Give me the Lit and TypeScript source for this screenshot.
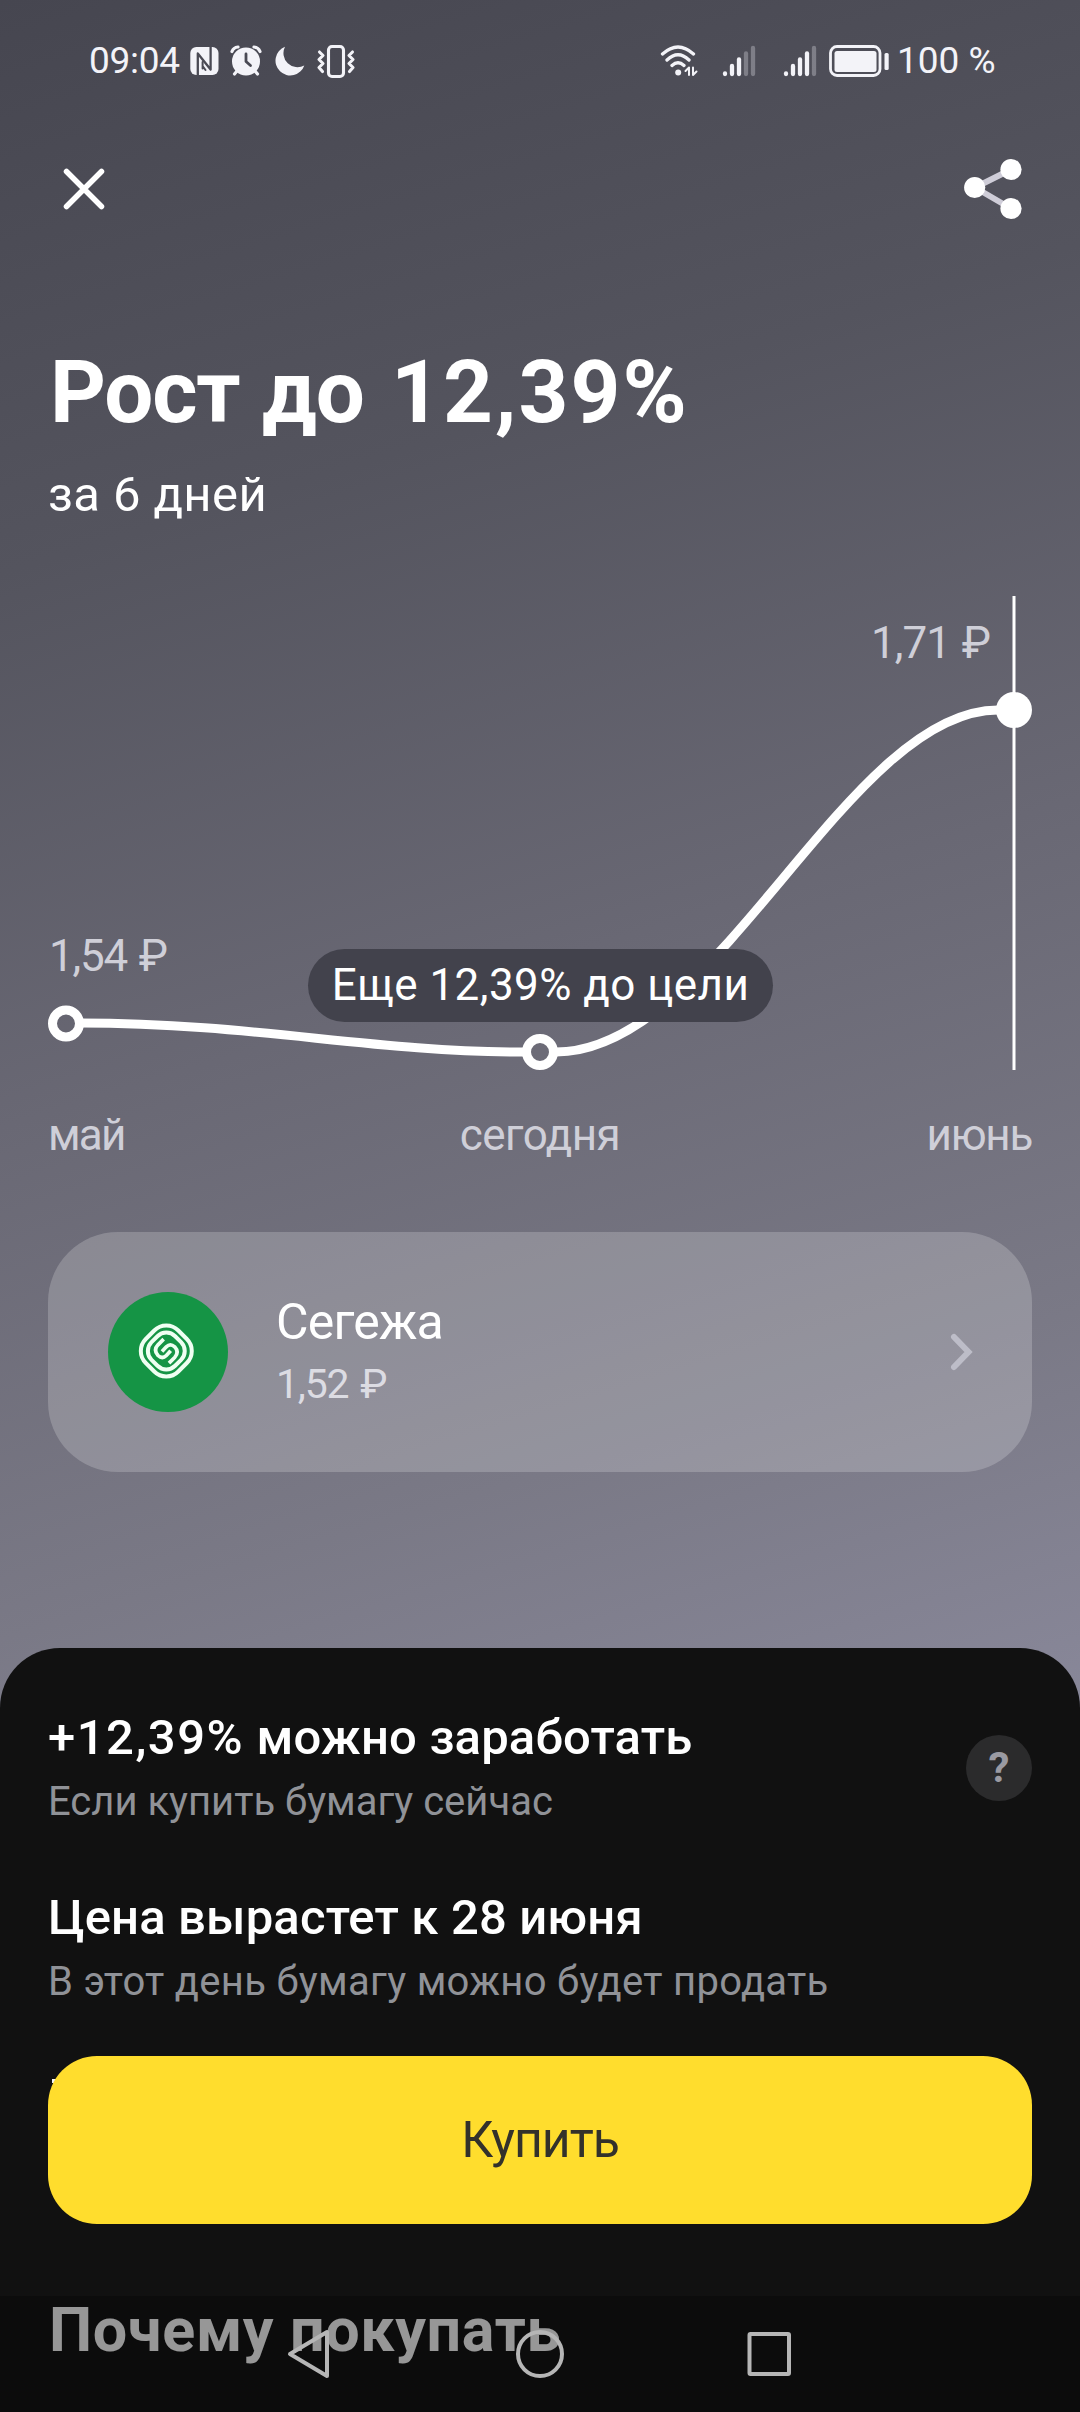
import { LitElement, html, css, svg } from "lit";
import { customElement } from "lit/decorators.js";

@customElement("app-root")
export class AppRoot extends LitElement {
  static styles = css`
    :host { display: block; width: 1080px; height: 2412px; overflow: hidden; position: relative;
      font-family: Roboto, "Noto Sans", sans-serif; color: #fff; background: #111; line-height: 1; white-space: nowrap; }
    * { box-sizing: border-box; margin: 0; }
    svg { display: block; flex: none; }
    .hero { height: 1720px; background: linear-gradient(163deg, #464650 0%, #54545e 28%, #696874 55%, #7a7986 80%, #89889a 100%); display: flex; flex-direction: column; }
    .status { height: 122px; display: flex; justify-content: space-between; padding: 42px 84px 0 89px; color: #f3f3f8; font-size: 37px; }
    .group { display: flex; height: 40px; align-items: center; }
    .time { width: 99px; letter-spacing: -.3px; margin-top: -3px; }
    .pct { width: 100px; padding-left: 1px; margin-top: -3px; }
    .bar { display: flex; justify-content: space-between; align-items: center; height: 134px; padding: 0 48px; }
    .title { font-size: 87px; font-weight: 700; margin: 96px 0 0 50px; height: 106px; line-height: 81px; letter-spacing: -1.2px; word-spacing: 2px; }
    .title span { letter-spacing: 2.1px; margin-left: 5px; }
    .sub { font-size: 49px; margin-left: 48px; height: 138px; line-height: 74px; letter-spacing: .4px; }
    .chart { position: relative; height: 487px; }
    .val { position: absolute; font-size: 44px; color: #cfcfd8; letter-spacing: -1.2px; word-spacing: 2px; }
    .v1 { left: 49px; top: 338px; }
    .v2 { right: 90px; top: 25px; letter-spacing: -1px; }
    .tip { position: absolute; left: 308px; top: 353px; width: 465px; height: 73px; border-radius: 37px; background: #42424c; display: flex; align-items: center; justify-content: center; font-size: 44px; letter-spacing: .45px; padding-bottom: 2px; }
    .months { display: grid; grid-template-columns: 1fr auto 1fr; padding: 0 48px; font-size: 44px; height: 149px; line-height: 104px; color: #cfcfd8; letter-spacing: -.5px; }
    .may { letter-spacing: -1.8px; }
    .june { text-align: right; letter-spacing: -1.3px; }
    .card { margin: 0 48px; height: 240px; border-radius: 70px; background: rgba(255,255,255,.2); display: flex; align-items: center; padding: 0 56px 0 60px; }
    .names { flex: 1; margin-left: 48px; padding-top: 4px; }
    .name { font-size: 50px; line-height: 60px; letter-spacing: -.8px; }
    .price { font-size: 41px; line-height: 64px; color: #dcdce3; letter-spacing: -1.2px; word-spacing: 3px; }
    .sheet { position: absolute; left: 0; top: 1648px; width: 1080px; height: 764px; border-radius: 60px 60px 0 0; background: #111; padding: 60px 48px 0; }
    .row { display: flex; justify-content: space-between; align-items: center; height: 120px; margin-bottom: 60px; }
    .h { font-size: 49px; font-weight: 500; line-height: 60px; letter-spacing: .15px; }
    .h b { font-weight: 500; letter-spacing: 1.5px; }
    .d { font-size: 40px; line-height: 60px; padding-top: 4px; margin-bottom: -4px; color: #909297; }
    .wide { letter-spacing: .3px; }
    .help { width: 66px; height: 66px; border-radius: 50%; background: #2b2b2c; color: #9a9aa2; font-size: 42px; font-weight: 700; display: flex; align-items: center; justify-content: center; }
    .peek { width: 7px; height: 4px; background: #f4f4f4; margin: 71px 0 0 4px; }
    .buy { position: absolute; left: 48px; top: 408px; width: 984px; height: 168px; border-radius: 49px; background: #ffdd2d; color: #33312b; font-size: 50px; letter-spacing: -1px; display: flex; align-items: center; justify-content: center; }
    .why { position: absolute; left: 49px; top: 652px; font-size: 61px; font-weight: 700; letter-spacing: .65px; }
    .nav { position: absolute; left: 0; top: 2296px; width: 1080px; height: 116px; background: rgba(8,8,8,.42); }
  `;

  private signal(x: number, on: number) {
    return [73.5, 66, 59.5, 53.5, 48].map(
      (top, i) => svg`<path d=${`M${x + i * 7} ${top}V74`} stroke-width="4.3" opacity=${i < on ? 1 : 0.3} />`
    );
  }

  render() {
    return html`
      <div class="hero">
        <div class="status">
          <div class="group">
            <span class="time">09:04</span>
            <svg width="170" height="40" viewBox="188 42 170 40" fill="none" stroke-linecap="round" stroke-linejoin="round">
              <rect x="190.3" y="47" width="28.2" height="28" rx="6" fill="#f3f3f8" />
              <path d="M197.8 76V53.5L210.6 69.5V46" stroke="#4a4a54" stroke-width="2.3" stroke-linecap="butt" />
              <path d="M202.6 68.5V62M205.5 70L202.6 66" stroke="#4a4a54" stroke-width="2" />
              <g stroke="#f3f3f8" stroke-width="3.2">
                <circle cx="246" cy="61.5" r="14" fill="#f3f3f8" stroke="none" />
                <path d="M232 51.5Q233.500 47.500 238 47M260 51.5Q258.500 47.500 254 47M237 71L234.500 74M255 71L257.500 74" />
              </g>
              <path d="M246 54V61.500L250.500 65.500" stroke="#4a4a54" stroke-width="2.800" />
              <path d="M285 46.800A14.800 14.800 0 1 0 304.300 65.400A14 14 0 0 1 285 46.800Z" fill="#f3f3f8" />
              <g stroke="#f3f3f8" stroke-width="3.100">
                <rect x="328.500" y="46.500" width="15" height="30" rx="3.500" />
                <path d="M319.500 52L323 55.500L319 59.500L323 63.500L319 67.500L322.500 71.500M352.500 52L349 55.500L353 59.500L349 63.500L353 67.500L349.500 71.500" />
              </g>
            </svg>
          </div>
          <div class="group">
            <svg width="238" height="40" viewBox="658 42 238 40" fill="none" stroke="#f3f3f8" stroke-linecap="round">
              <path d="M662.500 54Q678 40 693.500 54M667 60Q678 49.500 689 60M672 65.500Q678 60 684 65.500" stroke-width="3.300" />
              <circle cx="678.200" cy="72.500" r="3" fill="#f3f3f8" stroke="none" />
              <path d="M685.500 71L689 67.500V75M693 67.500V75L696.500 71.500" stroke-width="2" stroke-linejoin="round" />
              ${this.signal(725, 3)}${this.signal(786, 4)}
              <rect x="830.500" y="46.500" width="49.500" height="29" rx="6.500" stroke-width="2.800" />
              <rect x="834.500" y="51" width="42" height="21" rx="2.500" fill="#f3f3f8" stroke="none" />
              <rect x="884.500" y="53" width="4.200" height="17" rx="1.500" fill="#f3f3f8" stroke="none" />
            </svg>
            <span class="pct">100 %</span>
          </div>
        </div>
        <div class="bar">
          <svg width="72" height="72" viewBox="48 153 72 72" stroke="#fff" stroke-width="5.500" stroke-linecap="round">
            <path d="M66.500 171.500L101.500 206.500M101.500 171.500L66.500 206.500" />
          </svg>
          <svg width="72" height="72" viewBox="960 153 72 72" fill="#fff">
            <path d="M1011 169.500L975 187.500L1011 208.500" fill="none" stroke="#cfcdd8" stroke-width="6" />
            <circle cx="974.700" cy="187.500" r="10.600" /><circle cx="1011" cy="169.500" r="10.600" /><circle cx="1011" cy="208.500" r="10.600" />
          </svg>
        </div>
        <h1 class="title">Рост до <span>12,39%</span></h1>
        <div class="sub">за 6 дней</div>
        <div class="chart">
          <svg width="1080" height="487" viewBox="0 596 1080 487" fill="none" stroke="#fff">
            <path d="M1014 596V1070" stroke-width="3" />
            <path d="M80 1023C253 1023 371 1052 524 1052M556 1052C717 1052 847 710 998 710" stroke-width="9" />
            <circle cx="66" cy="1023.500" r="13.500" stroke-width="9" />
            <circle cx="540" cy="1052" r="13.500" stroke-width="9" />
            <circle cx="1014" cy="710" r="18" fill="#fff" stroke="none" />
          </svg>
          <span class="val v1">1,54 ₽</span><span class="val v2">1,71 ₽</span>
          <div class="tip">Еще 12,39% до цели</div>
        </div>
        <div class="months"><span class="may">май</span><span>сегодня</span><span class="june">июнь</span></div>
        <div class="card">
          <svg width="120" height="120" viewBox="108 1292 120 120" fill="none" stroke="#effff2" stroke-width="4">
            <circle cx="168" cy="1352" r="60" fill="#159445" stroke="none" />
            <g transform="rotate(45 166.300 1351)">
              <rect x="143.300" y="1328" width="46" height="46" rx="17" />
              <rect x="149.600" y="1334.300" width="33.400" height="33.400" rx="12.500" />
            </g>
            <g transform="translate(130 1315.500) scale(.3333)" stroke-width="11">
              <path d="M101 71L84 88Q69 104 84 120Q97 132 109 120L122 106" />
              <path d="M117 143L134 126Q149 110 134 94Q121 82 109 94L96 108" />
            </g>
          </svg>
          <div class="names"><div class="name">Сегежа</div><div class="price">1,52 ₽</div></div>
          <svg width="28" height="40" viewBox="948 1332 28 40" fill="none" stroke="#bdbdc8" stroke-width="6" stroke-linecap="round">
            <path d="M954 1337L968.500 1352L954 1367" />
          </svg>
        </div>
      </div>
      <div class="sheet">
        <div class="row"><div><div class="h"><b>+12,39%</b> можно заработать</div><div class="d">Если купить бумагу сейчас</div></div><div class="help">?</div></div>
        <div class="row"><div><div class="h">Цена вырастет к 28 июня</div><div class="d wide">В этот день бумагу можно будет продать</div></div></div>
        <div class="peek"></div>
        <div class="buy">Купить</div>
        <h2 class="why">Почему покупать</h2>
      </div>
      <div class="nav">
        <svg width="1080" height="116" viewBox="0 2296 1080 116" fill="none" stroke="#b6b6b6" stroke-width="4" stroke-linejoin="round">
          <path d="M290 2354L327 2332V2376Z" />
          <circle cx="540" cy="2354" r="22" />
          <rect x="749.500" y="2334" width="39.500" height="40" rx="1" />
        </svg>
      </div>
    `;
  }
}
